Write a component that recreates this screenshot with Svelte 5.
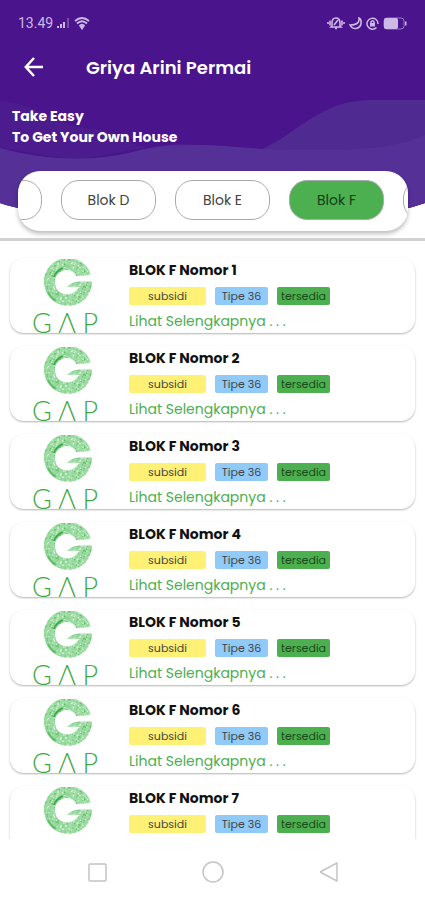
<script>
  let blocks = ['Blok C', 'Blok D', 'Blok E', 'Blok F', 'Blok G'];
  let selected = 'Blok F';

  const units = [1, 2, 3, 4, 5, 6, 7].map((nomor) => ({
    nomor,
    jenis: 'subsidi',
    tipe: 'Tipe 36',
    status: 'tersedia'
  }));

  const shades = ['#5fc069', '#c9efce', '#7ccb84', '#dcf5df'];

  // leaf texture of the logo
  const dots = [];
  for (let i = 0; i < 420; i++) {
    dots.push({
      x: (i * 29.3) % 48,
      y: (i * 17.7 + ((i * i) % 13)) % 48,
      r: 0.5 + (i % 3) * 0.2,
      color: shades[(i * 7 + (i >> 2)) % 4]
    });
  }

  const select = (block) => () => {
    selected = block;
  };
</script>

<svg class="defs" width="0" height="0" aria-hidden="true">
  <defs>
    <clipPath id="g-shape">
      <path d="M47 16A24 24 0 1 0 48 22.500L35 22.500Q27 23 23 28L35 27.500C33 33 28 35.500 23 35.500C16 35.500 11 30 11 23.500C11 16 16 11 23 11C28 11 31 14 32 17Z" />
    </clipPath>
    <symbol id="gap-logo" viewBox="0 0 48 48">
      <g clip-path="url(#g-shape)">
        <rect width="48" height="48" fill="#9bdba1" />
        {#each dots as dot}
          <circle cx={dot.x} cy={dot.y} r={dot.r} fill={dot.color} />
        {/each}
        <path d="M10 18Q12 12 19 9" stroke="#3fae4b" stroke-width="2" fill="none" />
        <path d="M4 33Q7 39 12 42" stroke="#5fc069" stroke-width="2" fill="none" />
      </g>
    </symbol>
  </defs>
</svg>

<div class="screen">
  <header>
    <svg class="waves" viewBox="0 0 425 210" preserveAspectRatio="none" aria-hidden="true">
      <path d="M0 0H425V203Q400 212 370 214H60Q20 210 0 203Z" fill="#4a148c" />
      <path d="M0 101C40 104 60 128 95 129C125 132 125 146 150 147L75 160L0 148Z" fill="#4c1b8e" />
      <path d="M0 148C50 162 100 162 140 150C180 138 230 149 262 149C300 132 320 100 372 100H425V203Q400 212 370 214H60Q20 210 0 203Z" fill="#4f2a90" />
      <path d="M0 148C50 162 100 162 145 149C185 142 225 146 262 149C330 151 390 152 425 135V203Q400 212 370 214H60Q20 210 0 203Z" fill="#543097" />
    </svg>

    <div class="status-bar">
      <span>13.49</span>
      <svg width="13" height="12" viewBox="0 0 13 12" fill="#cdb9e6">
        <path d="M0 9h2v2H0zM3 7h2v4H3zM6 5h2v6H6z" />
        <path d="M10 1h2v10h-2z" opacity=".35" />
      </svg>
      <svg width="16" height="13" viewBox="0 0 16 13" fill="none" stroke="#cdb9e6" stroke-width="1.800">
        <path d="M1 4Q8-2 15 4M3 6.500Q8 2 13 6.500M5.500 9Q8 6.500 10.500 9" />
        <path d="M7 10h2L8 11.500z" fill="#cdb9e6" />
      </svg>
      <div class="status-icons">
        <svg width="18" height="14" viewBox="0 0 18 14" fill="none" stroke="#cdb9e6" stroke-width="1.600">
          <path d="M5 10V7Q5 2 9 2T13 7V10L14 11H4zM8 12.500h2M3 4.500v5M15 4.500v5M1 6v2M17 6v2M7 9L11 4" />
        </svg>
        <svg width="13" height="13" viewBox="0 0 13 13" fill="none" stroke="#cdb9e6" stroke-width="1.600">
          <path d="M10 1Q11 8 1 8Q3 12 7 11.500Q13 10 12 4Q12 2 10 1Z" />
        </svg>
        <svg width="13" height="13" viewBox="0 0 13 13" fill="none" stroke="#cdb9e6" stroke-width="1.500">
          <path d="M10.500 10.500A5.500 5.500 0 1 1 12 7" />
          <path d="M4 6h5v3.500H4z" fill="#cdb9e6" stroke="none" />
          <path d="M5 6V5Q6.500 2.500 8 5V6" />
        </svg>
        <svg width="24" height="13" viewBox="0 0 24 13">
          <rect x="1" y="1" width="20" height="11" rx="3" fill="none" stroke="#cdb9e6" stroke-opacity=".6" />
          <rect x="1" y="1" width="14" height="11" rx="2" fill="#cdb9e6" />
          <path d="M22 4.500h1.500v4H22z" fill="#cdb9e6" />
        </svg>
      </div>
    </div>

    <div class="app-bar">
      <button class="back" aria-label="Kembali">
        <svg width="20" height="20" viewBox="0 0 20 20" fill="none" stroke="#fff" stroke-width="2.500">
          <path d="M10 1L1.800 10L10 19M2 10H19" />
        </svg>
      </button>
      <h1>Griya Arini Permai</h1>
    </div>

    <p class="tagline">Take Easy<br />To Get Your Own House</p>

    <nav class="block-bar">
      <div class="block-list">
        {#each blocks as block}
          <button class="block {selected === block && 'block--active'}" on:click={select(block)}>{block}</button>
        {/each}
      </div>
    </nav>
  </header>

  <main>
    {#each units as unit (unit.nomor)}
      <article class="card">
        <div class="logo">
          <svg width="48" height="48" aria-hidden="true"><use href="#gap-logo" /></svg>
          <div class="logo-name"><span>G</span><span>Λ</span><span>P</span></div>
        </div>
        <div class="info">
          <h2>BLOK F Nomor {unit.nomor}</h2>
          <div class="badges">
            <span class="badge badge--jenis">{unit.jenis}</span>
            <span class="badge badge--tipe">{unit.tipe}</span>
            <span class="badge badge--status">{unit.status}</span>
          </div>
          <a href="#unit-{unit.nomor}">Lihat Selengkapnya . . .</a>
        </div>
      </article>
    {/each}
  </main>

  <footer>
    <button aria-label="Aplikasi terbaru">
      <svg width="24" height="24" viewBox="0 0 24 24"><rect x="4" y="4" width="17" height="17" rx="1" /></svg>
    </button>
    <button aria-label="Beranda">
      <svg width="24" height="24" viewBox="0 0 24 24"><circle cx="12" cy="12" r="10" /></svg>
    </button>
    <button aria-label="Kembali ke layar sebelumnya">
      <svg width="24" height="24" viewBox="0 0 24 24"><path d="M20 3V21L4 12.500Q3 12 4 11.500Z" stroke-linejoin="round" /></svg>
    </button>
  </footer>
</div>

<style>
  :global(body) {
    background: #fff;
  }

  .defs {
    position: absolute;
  }

  .screen {
    height: 100vh;
    display: flex;
    flex-direction: column;
    overflow: hidden;
    font-family: Poppins, Inter, 'Open Sans', sans-serif;
    color: #111;
  }

  button {
    font-family: inherit;
    padding: 0;
    border: none;
    background: none;
    cursor: pointer;
  }

  header {
    position: relative;
    flex: none;
    padding-bottom: 7px;
    border-bottom: 3px solid #d2d2d2;
    color: #fff;
  }

  .waves {
    position: absolute;
    top: 0;
    left: 0;
    width: 100%;
    height: 210px;
    z-index: -1;
  }

  .status-bar {
    display: flex;
    align-items: center;
    gap: 4px;
    height: 46px;
    padding: 0 18px;
    font-family: Roboto, sans-serif;
    font-size: 14px;
    color: #cdb9e6;
  }

  .status-icons {
    display: flex;
    align-items: center;
    gap: 4px;
    margin-left: auto;
  }

  .app-bar {
    display: flex;
    align-items: center;
    height: 42px;
    padding-left: 24px;
  }

  .back {
    display: flex;
    width: 62px;
  }

  h1 {
    margin: 0;
    font-size: 18px;
    font-weight: 600;
  }

  .tagline {
    margin: 18px 12px 23px;
    font-size: 14px;
    font-weight: 700;
    line-height: 21px;
  }

  .block-bar {
    margin: 0 17px 0 18px;
    padding: 9px 0 11px;
    overflow: hidden;
    border-radius: 22px;
    background: #fff;
    box-shadow: 0 3px 4px rgba(0, 0, 0, 0.25);
  }

  .block-list {
    display: flex;
    gap: 19px;
    margin-left: -71px;
  }

  .block {
    flex: none;
    width: 95px;
    height: 40px;
    border: 1px solid #aaa;
    border-radius: 18px;
    font-size: 14px;
    color: #444;
  }

  .block--active {
    background: #4caf50;
    color: #173d19;
  }

  main {
    flex: 1;
    min-height: 0;
    overflow: hidden;
    display: flex;
    flex-direction: column;
    gap: 13px;
    padding: 17px 10px 0;
  }

  .card {
    flex: none;
    display: flex;
    height: 75px;
    overflow: hidden;
    border-radius: 14px;
    box-shadow: 0 1px 2px rgba(0, 0, 0, 0.3);
  }

  .logo {
    display: flex;
    flex-direction: column;
    align-items: flex-end;
    width: 66px;
    margin: 0 31px 0 22px;
  }

  .logo svg {
    flex: none;
    margin: 1px 6px 0 0;
  }

  .logo-name {
    display: flex;
    justify-content: space-between;
    width: 100%;
    font-family: Lato, sans-serif;
    font-size: 27px;
    font-weight: 300;
    line-height: 32px;
    color: #3fa845;
  }

  h2 {
    margin: 3px 0 7px;
    font-size: 14px;
    font-weight: 700;
    line-height: 19px;
  }

  .badges {
    display: flex;
    gap: 9px;
    margin-bottom: 6px;
  }

  .badge {
    width: 53px;
    border-radius: 2px;
    font-size: 11px;
    line-height: 18px;
    text-align: center;
    color: #444;
  }

  .badge--jenis {
    width: 77px;
    background: #fff176;
  }

  .badge--tipe {
    background: #90caf9;
  }

  .badge--status {
    background: #4caf50;
    color: #1d4a20;
  }

  .info a {
    display: block;
    font-size: 14px;
    line-height: 20px;
    color: #4caf50;
    text-decoration: none;
  }

  footer {
    flex: none;
    display: flex;
    justify-content: center;
    gap: 92px;
    padding: 21px 0 16px;
  }

  footer button {
    display: flex;
  }

  footer svg {
    fill: none;
    stroke: #c4c4c4;
    stroke-width: 1.500;
  }
</style>
